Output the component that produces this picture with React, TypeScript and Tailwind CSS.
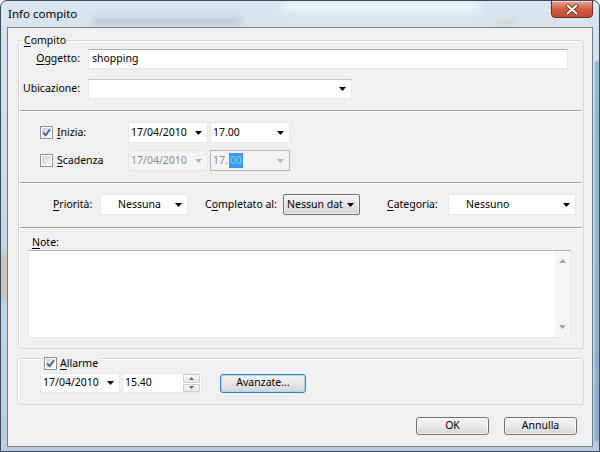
import React from "react";

function Arrow({ dis = false }: { dis?: boolean }) {
  return (
    <svg width="7" height="4" viewBox="0 0 7 4" className="shrink-0">
      <path d="M0 0H7L3.5 4Z" fill={dis ? "#b4b4b4" : "#000"} />
    </svg>
  );
}

function CheckBox({ checked = false }: { checked?: boolean }) {
  return (
    <span className="flex h-[13px] w-[13px] shrink-0 border border-[#8f8f8f] bg-white p-[1px]">
      <span className="flex flex-1 items-center justify-center bg-gradient-to-br from-[#cbd0d7] to-[#f8f8f8]">
        {checked && (
          <svg width="9" height="9" viewBox="0 0 9 9">
            <path d="M1.2 4.6L3.6 7.2L8 1.2" fill="none" stroke="#3f5b8f" strokeWidth="1.7" />
          </svg>
        )}
      </span>
    </span>
  );
}

function U({ children }: { children: React.ReactNode }) {
  return <span className="underline decoration-1 underline-offset-2">{children}</span>;
}

function Sep() {
  return <div className="mx-[1px] h-0 border-t border-b border-t-[#a0a0a0] border-b-white" />;
}

export default function App() {
  return (
    <div className="relative h-[452px] w-[600px] overflow-hidden rounded-t-[7px] border border-[#3b4a5a] bg-gradient-to-b from-[#dbe5ee] via-[#c9d8e6] to-[#b9cde0] font-['Noto_Sans',sans-serif] text-[10.5px] text-black">
      {/* glass blur decoration */}
      <div className="pointer-events-none absolute left-[90px] top-[16px] h-[9px] w-[150px] rounded bg-[#8796a6] opacity-30 blur-[3px]" />
      <div className="pointer-events-none absolute left-[280px] top-[0px] h-[12px] w-[200px] rounded bg-[#ffffff] opacity-50 blur-[4px]" />
      <div className="pointer-events-none absolute left-[495px] top-[19px] h-[5px] w-[18px] rounded bg-[#c7b26a] opacity-30 blur-[2px]" />
      <div className="pointer-events-none absolute left-[0px] top-[250px] h-[50px] w-[7px] bg-[#c9a867] opacity-50 blur-[3px]" />
      <div className="pointer-events-none absolute right-[0px] top-[60px] h-[380px] w-[4px] bg-[#5d8fc4] opacity-60 blur-[1px]" />

      {/* title bar */}
      <div className="relative flex h-[26px] items-center pl-[7px]">
        <span className="text-[11.5px] leading-none">Info compito</span>
      </div>
      {/* close button */}
      <div className="absolute right-[6px] top-[-1px] flex h-[18px] w-[42px] items-center justify-center rounded-b-[4px] border border-[#6a2c22] bg-gradient-to-b from-[#e9a897] via-[#d05a40] to-[#c24a30] shadow-[inset_0_1px_0_rgba(255,255,255,0.5)]">
        <svg width="14" height="11" viewBox="0 0 14 11">
          <path d="M2.5 1.5L11.5 9.5M11.5 1.5L2.5 9.5" stroke="#5a2a22" strokeWidth="3.6" strokeLinecap="round" />
          <path d="M2.5 1.5L11.5 9.5M11.5 1.5L2.5 9.5" stroke="#ffffff" strokeWidth="2" strokeLinecap="round" />
        </svg>
      </div>

      {/* client */}
      <div className="relative ml-[6px] flex h-[420px] w-[586px] flex-col border border-[#6f7f90] bg-[#f0f0f0]">
        {/* Compito group */}
        <fieldset className="ml-[10px] mt-[5px] w-[566px] rounded-[3px] border border-[#d5d5d5] pb-[10px] shadow-[inset_1px_1px_0_#ffffff]">
          <legend className="ml-[4px] px-[1px] leading-[14px]">
            <U>C</U>ompito
          </legend>
          {/* Oggetto */}
          <div className="mt-[2px] flex h-[20px] items-center">
            <div className="w-[61px] text-right">
              <U>O</U>ggetto:
            </div>
            <div className="ml-[8px] flex h-[20px] w-[480px] items-center border border-[#e3e9ef] border-t-[#abadb3] bg-white pl-[3px]">
              shopping
            </div>
          </div>
          {/* Ubicazione */}
          <div className="mt-[10px] flex h-[20px] items-center">
            <div className="w-[61px] text-right">Ubicazione:</div>
            <div className="ml-[8px] flex h-[20px] w-[264px] items-center justify-end border border-[#e3e9ef] border-t-[#c5c8ce] bg-white pr-[5px]">
              <Arrow />
            </div>
          </div>
          <div className="mt-[11px]">
            <Sep />
          </div>
          {/* Inizia */}
          <div className="mt-[10px] flex h-[21px] items-center pl-[21px]">
            <div className="flex w-[88px] items-center">
              <CheckBox checked />
              <span className="ml-[4px]">
                <U>I</U>nizia:
              </span>
            </div>
            <div className="flex h-[21px] w-[80px] items-center justify-between border border-[#e8e8e8] bg-white pl-[2px] pr-[5px]">
              <span>17/04/2010</span>
              <Arrow />
            </div>
            <div className="ml-[2px] flex h-[21px] w-[80px] items-center justify-between border border-[#e8e8e8] bg-white pl-[2px] pr-[5px]">
              <span>17.00</span>
              <Arrow />
            </div>
          </div>
          {/* Scadenza */}
          <div className="mt-[7px] flex h-[21px] items-center pl-[21px]">
            <div className="flex w-[88px] items-center">
              <CheckBox />
              <span className="ml-[4px]">
                <U>S</U>cadenza
              </span>
            </div>
            <div className="flex h-[21px] w-[80px] items-center justify-between border border-[#e6e6e6] bg-[#f4f4f4] pl-[2px] pr-[5px] text-[#8d8d8d]">
              <span>17/04/2010</span>
              <Arrow dis />
            </div>
            <div className="ml-[2px] flex h-[21px] w-[80px] items-center justify-between border border-[#b7b7b7] bg-[#f4f4f4] pl-[2px] pr-[5px] text-[#8d8d8d]">
              <span className="flex items-center">
                17.<span className="ml-[1px] bg-[#3399ff] px-[1px] leading-[15px] text-[#9cc8f5]">00</span>
              </span>
              <Arrow dis />
            </div>
          </div>
          <div className="mt-[11px]">
            <Sep />
          </div>
          {/* Priorità row */}
          <div className="mt-[10px] flex h-[21px] items-center pl-[34px]">
            <div className="w-[47px]">
              <U>P</U>riorità:
            </div>
            <div className="flex h-[21px] w-[88px] items-center justify-between border border-[#e8e8e8] bg-white pl-[17px] pr-[5px]">
              <span>Nessuna</span>
              <Arrow />
            </div>
            <div className="ml-[17px] w-[78px]">
              C<U>o</U>mpletato al:
            </div>
            <div className="flex h-[21px] w-[77px] items-center justify-between rounded-[2px] border border-[#707070] bg-gradient-to-b from-[#f3f3f3] via-[#e6e6e6] to-[#d3d3d3] pl-[3px] pr-[5px] shadow-[inset_0_0_0_1px_rgba(255,255,255,0.7)]">
              <span>Nessun dat</span>
              <Arrow />
            </div>
            <div className="ml-[27px] w-[61px]">
              <U>C</U>ategoria:
            </div>
            <div className="flex h-[21px] w-[128px] items-center justify-between border border-[#e8e8e8] bg-white pl-[17px] pr-[5px]">
              <span>Nessuno</span>
              <Arrow />
            </div>
          </div>
          <div className="mt-[12px]">
            <Sep />
          </div>
          {/* Note */}
          <div className="mt-[6px] pl-[13px] leading-[14px]">
            <U>N</U>ote:
          </div>
          <div className="ml-[9px] mt-[1px] flex h-[88px] w-[543px] border border-[#e3e9ef] border-t-[#abadb3] bg-white">
            <div className="flex-1" />
            <div className="flex w-[15px] flex-col items-center justify-between bg-[#f5f5f5] py-[8px]">
              <svg width="7" height="4" viewBox="0 0 7 4">
                <path d="M0 4H7L3.5 0Z" fill="#a5a5a5" />
              </svg>
              <svg width="7" height="4" viewBox="0 0 7 4">
                <path d="M0 0H7L3.5 4Z" fill="#a5a5a5" />
              </svg>
            </div>
          </div>
        </fieldset>

        {/* Allarme group */}
        <div className="relative ml-[9px] mt-[9px] h-[47px] w-[567px] rounded-[3px] border border-[#d5d5d5] shadow-[inset_1px_1px_0_#ffffff]">
          <div className="absolute left-[26px] top-[-2px] flex items-center bg-[#f0f0f0] pr-[3px]">
            <CheckBox checked />
            <span className="ml-[3px] leading-[13px]">
              <U>A</U>llarme
            </span>
          </div>
          <div className="ml-[22px] mt-[14px] flex items-center">
            <div className="flex h-[20px] w-[80px] items-center justify-between border border-[#e8e8e8] bg-white pl-[2px] pr-[5px]">
              <span>17/04/2010</span>
              <Arrow />
            </div>
            <div className="ml-[2px] flex h-[20px] w-[80px] items-center justify-between border border-[#e8e8e8] bg-white pl-[2px] pr-[1px]">
              <span>15.40</span>
              <div className="flex h-[18px] w-[17px] flex-col gap-[1px]">
                <div className="flex flex-1 items-center justify-center rounded-[1px] border border-[#c8cdd3] bg-gradient-to-b from-[#f8f8f8] to-[#e6e6e6]">
                  <svg width="5" height="3" viewBox="0 0 5 3">
                    <path d="M0 3H5L2.5 0Z" fill="#5a6675" />
                  </svg>
                </div>
                <div className="flex flex-1 items-center justify-center rounded-[1px] border border-[#c8cdd3] bg-gradient-to-b from-[#f8f8f8] to-[#e6e6e6]">
                  <svg width="5" height="3" viewBox="0 0 5 3">
                    <path d="M0 0H5L2.5 3Z" fill="#5a6675" />
                  </svg>
                </div>
              </div>
            </div>
            <div className="ml-[18px] flex h-[19px] w-[86px] items-center justify-center rounded-[3px] border border-[#3c7fb1] bg-gradient-to-b from-[#f2f2f2] via-[#e8e8e8] to-[#d4d4d4] shadow-[inset_0_0_0_1px_#a6d8f5]">
              Avanzate...
            </div>
          </div>
        </div>

        {/* buttons */}
        <div className="mr-[15px] mt-[12px] flex justify-end gap-[15px]">
          <div className="flex h-[18px] w-[73px] items-center justify-center rounded-[3px] border border-[#707070] bg-gradient-to-b from-[#f2f2f2] via-[#ebebeb] to-[#d2d2d2] shadow-[inset_0_0_0_1px_rgba(255,255,255,0.8)]">
            OK
          </div>
          <div className="flex h-[18px] w-[73px] items-center justify-center rounded-[3px] border border-[#707070] bg-gradient-to-b from-[#f2f2f2] via-[#ebebeb] to-[#d2d2d2] shadow-[inset_0_0_0_1px_rgba(255,255,255,0.8)]">
            Annulla
          </div>
        </div>
      </div>
    </div>
  );
}
